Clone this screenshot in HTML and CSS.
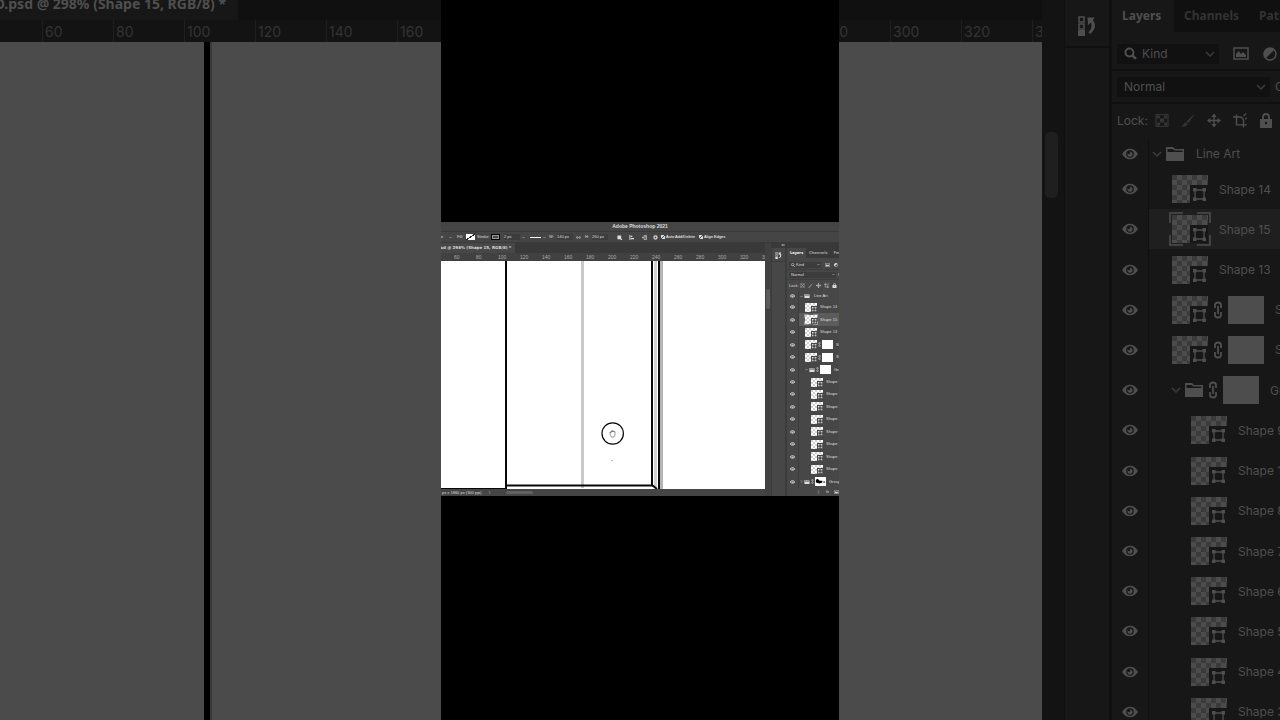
FILE: index.html
```html
<!DOCTYPE html>
<html lang="en">
<head>
    <meta charset="UTF-8">
    <meta name="viewport" content="width=device-width, initial-scale=1.0">
    <title>Adobe Photoshop 2021</title>
    <link rel="stylesheet" href="styles.css">
</head>
<body>
    <!-- shared icons -->
    <svg class="sprite" aria-hidden="true">
        <symbol id="eye" viewBox="0 0 16 12">
            <path d="M0 6C4-1 12-1 16 6C12 13 4 13 0 6Z" fill="currentColor"/>
            <circle cx="8" cy="6" r="3.800" class="hole"/>
            <circle cx="8" cy="6.300" r="2.500" fill="currentColor"/>
            <circle cx="7" cy="5" r="1.200" class="hole"/>
        </symbol>
        <symbol id="down" viewBox="0 0 10 10">
            <path d="M1 3L5 7L9 3" fill="none" stroke="currentColor" stroke-width="1.5"/>
        </symbol>
        <symbol id="right" viewBox="0 0 10 10">
            <path d="M3 1L7 5L3 9" fill="none" stroke="currentColor" stroke-width="1.5"/>
        </symbol>
        <symbol id="folder" viewBox="0 0 18 14">
            <path d="M0 0H7L9 2H18V14H0Z" fill="currentColor"/>
            <path d="M1.500 2H6.500L8.500 3.500H16.500V5H1.500Z" class="hole"/>
        </symbol>
        <symbol id="link" viewBox="0 0 10 18">
            <path d="M2 7V4Q2 1.500 5 1.500T8 4V7M2 11V14Q2 16.500 5 16.500T8 14V11M5 5V13" fill="none" stroke="currentColor" stroke-width="1.800"/>
        </symbol>
        <symbol id="shape" viewBox="0 0 18 18">
            <path d="M0 0H18V18H0Z" class="hole"/>
            <path d="M5 5H14V14H5Z" fill="none" stroke="currentColor" stroke-width="1.300"/>
            <path d="M3 3H6.500V6.500H3ZM12.500 3H16V6.500H12.500ZM3 12.500H6.500V16H3ZM12.500 12.500H16V16H12.500Z" fill="currentColor"/>
        </symbol>
        <symbol id="brackets" viewBox="0 0 42 34">
            <path d="M1 11V1H14M28 1H41V11M41 23V33H28M14 33H1V23" fill="none" stroke="currentColor" stroke-width="1.500"/>
        </symbol>
        <symbol id="history" viewBox="0 0 18 20">
            <path d="M1 1H6V6H1ZM1 8H6V13H1Z" fill="none" stroke="currentColor" stroke-width="1.500"/>
            <path d="M0 14H7V20H0ZM9.500 1.500H16.500L15 4Q20 12 12 18L10.500 16.500Q15 12 13 6.500L10 9Z" fill="currentColor"/>
        </symbol>
        <symbol id="search" viewBox="0 0 12 12">
            <path d="M7.500 7.500L11 11" stroke="currentColor" stroke-width="2.500"/>
            <circle cx="5" cy="5" r="3.700" fill="none" stroke="currentColor" stroke-width="1.800"/>
        </symbol>
        <symbol id="image" viewBox="0 0 16 13">
            <path d="M1 1H15V12H1Z" fill="none" stroke="currentColor" stroke-width="1.500"/>
            <path d="M3 10V7L6 4L8 7L10 5L13 8V10Z" fill="currentColor"/>
        </symbol>
        <symbol id="adjust" viewBox="0 0 14 14">
            <circle cx="7" cy="7" r="6" fill="none" stroke="currentColor" stroke-width="1.500"/>
            <path d="M11.500 2.500A6 6 0 0 0 2.500 11.500Z" fill="currentColor"/>
        </symbol>
        <symbol id="pixels" viewBox="0 0 14 14">
            <path d="M1 1H13V13H1Z" fill="none" stroke="currentColor" stroke-width="1.200"/>
            <path d="M2 2H5V5H2ZM9 2H12V5H9ZM5 5H9V9H5ZM2 9H5V12H2ZM9 9H12V12H9Z" fill="currentColor"/>
        </symbol>
        <symbol id="brush" viewBox="0 0 16 16">
            <path d="M16 0L8.500 11L6 9ZM5.500 10L8 12Q6 16 0 15Q3 14 3 12Q3.500 10 5.500 10Z" fill="currentColor"/>
        </symbol>
        <symbol id="move" viewBox="0 0 16 16">
            <path d="M8 2V14M2 8H14" stroke="currentColor" stroke-width="1.500"/>
            <path d="M8 0L11 4H5ZM8 16L5 12H11ZM0 8L4 5V11ZM16 8L12 11V5Z" fill="currentColor"/>
        </symbol>
        <symbol id="crop" viewBox="0 0 16 16">
            <path d="M4 1V13H16M0 4H9L12 7V16M12 3L15 0M14 6L16 5" fill="none" stroke="currentColor" stroke-width="1.600"/>
        </symbol>
        <symbol id="lock" viewBox="0 0 12 15">
            <path d="M3 7V4Q3 1 6 1T9 4V7" fill="none" stroke="currentColor" stroke-width="1.800"/>
            <path d="M0 6H12V15H0Z" fill="currentColor"/>
            <circle cx="6" cy="10" r="1.200" class="hole"/>
        </symbol>
        <symbol id="gear" viewBox="0 0 12 12">
            <circle cx="6" cy="6" r="3.700" fill="none" stroke="currentColor" stroke-width="3"/>
        </symbol>
        <symbol id="square" viewBox="0 0 12 12">
            <path d="M1 1H10V10H1ZM9 9H12V12H9Z" fill="currentColor"/>
        </symbol>
        <symbol id="align" viewBox="0 0 12 12">
            <path d="M1 0H3V12H1ZM4 2H8V5H4ZM4 7H12V10H4Z" fill="currentColor"/>
        </symbol>
        <symbol id="arrange" viewBox="0 0 12 12">
            <path d="M0 6H4M2 4V8M5 1H11V11H5ZM7 4H10M7 7H10" fill="none" stroke="currentColor" stroke-width="1.500"/>
        </symbol>
        <symbol id="collapse" viewBox="0 0 10 6">
            <path d="M0 3L4 0V6ZM5 3L9 0V6Z" fill="currentColor"/>
        </symbol>
    </svg>

    <main class="stage">
        <section class="side side-left">
            <div class="doc-tabs"><button class="doc-tab">D.psd @ 298% (Shape 15, RGB/8) *</button></div>
            <div class="ruler"><span>60</span><span>80</span><span>100</span><span>120</span><span>140</span><span>160</span></div>
            <div class="canvas">
                <svg class="side-line" viewBox="0 0 12 10" preserveAspectRatio="none">
                    <path d="M8 0H10V10H8Z" fill="#3a3a3a"/>
                    <path d="M2 0H8V10H2Z" fill="#000"/>
                </svg>
            </div>
        </section>

        <section class="video">
            <div class="app">
                <h1 class="title-bar">Adobe Photoshop 2021</h1>
                <form class="options">
                    <button type="button" class="tool-mode">e <svg class="chev"><use href="#down"/></svg></button>
                    <span>Fill:</span>
                    <button type="button" class="swatch fill" aria-label="Fill"></button>
                    <span>Stroke:</span>
                    <button type="button" class="swatch stroke" aria-label="Stroke"></button>
                    <label class="stroke-width"><input type="text" value="2 px" aria-label="Stroke width"><svg class="chev"><use href="#down"/></svg></label>
                    <button type="button" class="stroke-type" aria-label="Stroke type"><i></i><svg class="chev"><use href="#down"/></svg></button>
                    <label for="w">W:</label>
                    <input id="w" type="text" value="140 px">
                    <svg class="icon turned"><use href="#link"/></svg>
                    <label for="h">H:</label>
                    <input id="h" type="text" value="260 px">
                    <svg class="icon"><use href="#square"/></svg>
                    <svg class="icon"><use href="#align"/></svg>
                    <svg class="icon"><use href="#arrange"/></svg>
                    <svg class="icon"><use href="#gear"/></svg>
                    <label class="check"><input type="checkbox" checked>Auto Add/Delete</label>
                    <label class="check"><input type="checkbox" checked>Align Edges</label>
                </form>

                <div class="workspace">
                    <div class="document">
                        <div class="doc-tabs"><button class="doc-tab">D.psd @ 298% (Shape 15, RGB/8) *</button></div>
                        <div class="ruler"><span>60</span><span>80</span><span>100</span><span>120</span><span>140</span><span>160</span><span>180</span><span>200</span><span>220</span><span>240</span><span>260</span><span>280</span><span>300</span><span>320</span><span>340</span></div>
                        <div class="canvas">
                            <svg class="art" viewBox="0 0 324 228" preserveAspectRatio="none">
                                <path d="M140 0H143V227H140Z" fill="#c9c9c9"/>
                                <path d="M213 0H216V226H213Z" fill="#d0d0d0"/>
                                <path d="M219 0H222V228H219Z" fill="#b4b4b4"/>
                                <path d="M64 0H66V228H64ZM217 0H219V228H217Z" fill="#080808"/>
                                <path d="M65 224.500H211V0" fill="none" stroke="#080808" stroke-width="2"/>
                                <path d="M211 224L216 228M0 228H65" stroke="#080808" stroke-width="2"/>
                                <circle cx="171.700" cy="172.500" r="10.700" fill="#fff" stroke="#080808" stroke-width="1.200"/>
                                <path d="M169 173V171L170 172V170L171 171V169.500L172 171V169.500L173 171L174 170.500V174L173 176H170.500Z" fill="#fff" stroke="#555" stroke-width=".6"/>
                                <circle cx="171" cy="199.500" r=".8" fill="#aaa"/>
                            </svg>
                        </div>
                        <div class="status"><span>px x 1860 px (300 ppi)</span><svg class="chev"><use href="#right"/></svg><i class="thumb-h"></i></div>
                    </div>
                    <div class="scroll"><i></i></div>
                    <div class="side-panels">
                        <div class="collapse"><svg><use href="#collapse"/></svg></div>
                        <div class="dock"><button aria-label="History"><svg><use href="#history"/></svg></button></div>
                        <aside class="panel">
                            <nav class="panel-tabs"><button class="on">Layers</button><button>Channels</button><button>Paths</button></nav>
                            <div class="filter-row">
                                <div class="field kind"><svg class="find"><use href="#search"/></svg><select aria-label="Filter"><option>Kind</option></select><svg class="chev"><use href="#down"/></svg></div>
                                <svg class="image"><use href="#image"/></svg><svg class="adjust"><use href="#adjust"/></svg>
                            </div>
                            <div class="blend-row">
                                <div class="field"><select aria-label="Blend mode"><option>Normal</option></select><svg class="chev"><use href="#down"/></svg></div><span>Opacity</span>
                            </div>
                            <div class="lock-row"><span>Lock:</span><svg class="dim"><use href="#pixels"/></svg><svg class="dim"><use href="#brush"/></svg><svg><use href="#move"/></svg><svg><use href="#crop"/></svg><svg><use href="#lock"/></svg></div>
                            <div class="layer root"><svg class="eye"><use href="#eye"/></svg><div class="cell"><svg class="chev"><use href="#down"/></svg><svg class="folder"><use href="#folder"/></svg><span class="name">Line Art</span></div></div>
                            <div class="layers">
                                <div class="layer"><svg class="eye"><use href="#eye"/></svg><div class="cell in"><i class="thumb"><svg><use href="#shape"/></svg></i><span class="name">Shape 14</span></div></div>
                                <div class="layer selected"><svg class="eye"><use href="#eye"/></svg><div class="cell in"><i class="thumb"><svg><use href="#shape"/></svg><svg class="brackets"><use href="#brackets"/></svg></i><span class="name">Shape 15</span></div></div>
                                <div class="layer"><svg class="eye"><use href="#eye"/></svg><div class="cell in"><i class="thumb"><svg><use href="#shape"/></svg></i><span class="name">Shape 13</span></div></div>
                                <div class="layer"><svg class="eye"><use href="#eye"/></svg><div class="cell in"><i class="thumb"><svg><use href="#shape"/></svg></i><svg class="link"><use href="#link"/></svg><i class="mask"></i><span class="name">Shape 12</span></div></div>
                                <div class="layer"><svg class="eye"><use href="#eye"/></svg><div class="cell in"><i class="thumb"><svg><use href="#shape"/></svg></i><svg class="link"><use href="#link"/></svg><i class="mask"></i><span class="name">Shape 11</span></div></div>
                                <div class="layer"><svg class="eye"><use href="#eye"/></svg><div class="cell group"><svg class="chev"><use href="#down"/></svg><svg class="folder"><use href="#folder"/></svg><svg class="link"><use href="#link"/></svg><i class="mask"></i><span class="name">Group 1</span></div></div>
                                <div class="layer"><svg class="eye"><use href="#eye"/></svg><div class="cell deep"><i class="thumb"><svg><use href="#shape"/></svg></i><span class="name">Shape 9</span></div></div>
                                <div class="layer"><svg class="eye"><use href="#eye"/></svg><div class="cell deep"><i class="thumb"><svg><use href="#shape"/></svg></i><span class="name">Shape 10</span></div></div>
                                <div class="layer"><svg class="eye"><use href="#eye"/></svg><div class="cell deep"><i class="thumb"><svg><use href="#shape"/></svg></i><span class="name">Shape 8</span></div></div>
                                <div class="layer"><svg class="eye"><use href="#eye"/></svg><div class="cell deep"><i class="thumb"><svg><use href="#shape"/></svg></i><span class="name">Shape 7</span></div></div>
                                <div class="layer"><svg class="eye"><use href="#eye"/></svg><div class="cell deep"><i class="thumb"><svg><use href="#shape"/></svg></i><span class="name">Shape 6</span></div></div>
                                <div class="layer"><svg class="eye"><use href="#eye"/></svg><div class="cell deep"><i class="thumb"><svg><use href="#shape"/></svg></i><span class="name">Shape 5</span></div></div>
                                <div class="layer"><svg class="eye"><use href="#eye"/></svg><div class="cell deep"><i class="thumb"><svg><use href="#shape"/></svg></i><span class="name">Shape 4</span></div></div>
                                <div class="layer"><svg class="eye"><use href="#eye"/></svg><div class="cell deep"><i class="thumb"><svg><use href="#shape"/></svg></i><span class="name">Shape 3</span></div></div>
                                <div class="layer"><svg class="eye"><use href="#eye"/></svg><div class="cell"><svg class="chev"><use href="#right"/></svg><svg class="folder"><use href="#folder"/></svg><svg class="link"><use href="#link"/></svg><i class="mask"><svg viewBox="0 0 12 9"><path d="M1 3L3 2L5 4L8 4V6L5 7L1 6ZM9 5H11V6H9Z" fill="#000"/></svg></i><span class="name">Group 2</span></div></div>
                            </div>
                            <footer class="panel-foot"><svg class="dim"><use href="#link"/></svg><em>fx</em><svg><use href="#image"/></svg></footer>
                        </aside>
                    </div>
                </div>
            </div>
        </section>

        <section class="side side-right">
            <div class="document">
                <div class="doc-tabs"></div>
                <div class="ruler"><span>280</span><span>300</span><span>320</span><span>340</span></div>
                <div class="canvas"></div>
            </div>
            <div class="scroll"><i></i></div>
            <div class="dock"><button aria-label="History"><svg><use href="#history"/></svg></button></div>
            <aside class="panel">
                <nav class="panel-tabs"><button class="on">Layers</button><button>Channels</button><button>Paths</button></nav>
                <div class="filter-row">
                    <div class="field kind"><svg class="find"><use href="#search"/></svg><select aria-label="Filter"><option>Kind</option></select><svg class="chev"><use href="#down"/></svg></div>
                    <svg class="image"><use href="#image"/></svg><svg class="adjust"><use href="#adjust"/></svg>
                </div>
                <div class="blend-row">
                    <div class="field"><select aria-label="Blend mode"><option>Normal</option></select><svg class="chev"><use href="#down"/></svg></div><span>Opacity</span>
                </div>
                <div class="lock-row"><span>Lock:</span><svg class="dim"><use href="#pixels"/></svg><svg class="dim"><use href="#brush"/></svg><svg><use href="#move"/></svg><svg><use href="#crop"/></svg><svg><use href="#lock"/></svg></div>
                <div class="layer root"><svg class="eye"><use href="#eye"/></svg><div class="cell"><svg class="chev"><use href="#down"/></svg><svg class="folder"><use href="#folder"/></svg><span class="name">Line Art</span></div></div>
                <div class="layers">
                    <div class="layer"><svg class="eye"><use href="#eye"/></svg><div class="cell in"><i class="thumb"><svg><use href="#shape"/></svg></i><span class="name">Shape 14</span></div></div>
                    <div class="layer selected"><svg class="eye"><use href="#eye"/></svg><div class="cell in"><i class="thumb"><svg><use href="#shape"/></svg><svg class="brackets"><use href="#brackets"/></svg></i><span class="name">Shape 15</span></div></div>
                    <div class="layer"><svg class="eye"><use href="#eye"/></svg><div class="cell in"><i class="thumb"><svg><use href="#shape"/></svg></i><span class="name">Shape 13</span></div></div>
                    <div class="layer"><svg class="eye"><use href="#eye"/></svg><div class="cell in"><i class="thumb"><svg><use href="#shape"/></svg></i><svg class="link"><use href="#link"/></svg><i class="mask"></i><span class="name">Shape 12</span></div></div>
                    <div class="layer"><svg class="eye"><use href="#eye"/></svg><div class="cell in"><i class="thumb"><svg><use href="#shape"/></svg></i><svg class="link"><use href="#link"/></svg><i class="mask"></i><span class="name">Shape 11</span></div></div>
                    <div class="layer"><svg class="eye"><use href="#eye"/></svg><div class="cell group"><svg class="chev"><use href="#down"/></svg><svg class="folder"><use href="#folder"/></svg><svg class="link"><use href="#link"/></svg><i class="mask"></i><span class="name">Group 1</span></div></div>
                    <div class="layer"><svg class="eye"><use href="#eye"/></svg><div class="cell deep"><i class="thumb"><svg><use href="#shape"/></svg></i><span class="name">Shape 9</span></div></div>
                    <div class="layer"><svg class="eye"><use href="#eye"/></svg><div class="cell deep"><i class="thumb"><svg><use href="#shape"/></svg></i><span class="name">Shape 10</span></div></div>
                    <div class="layer"><svg class="eye"><use href="#eye"/></svg><div class="cell deep"><i class="thumb"><svg><use href="#shape"/></svg></i><span class="name">Shape 8</span></div></div>
                    <div class="layer"><svg class="eye"><use href="#eye"/></svg><div class="cell deep"><i class="thumb"><svg><use href="#shape"/></svg></i><span class="name">Shape 7</span></div></div>
                    <div class="layer"><svg class="eye"><use href="#eye"/></svg><div class="cell deep"><i class="thumb"><svg><use href="#shape"/></svg></i><span class="name">Shape 6</span></div></div>
                    <div class="layer"><svg class="eye"><use href="#eye"/></svg><div class="cell deep"><i class="thumb"><svg><use href="#shape"/></svg></i><span class="name">Shape 5</span></div></div>
                    <div class="layer"><svg class="eye"><use href="#eye"/></svg><div class="cell deep"><i class="thumb"><svg><use href="#shape"/></svg></i><span class="name">Shape 4</span></div></div>
                    <div class="layer"><svg class="eye"><use href="#eye"/></svg><div class="cell deep"><i class="thumb"><svg><use href="#shape"/></svg></i><span class="name">Shape 3</span></div></div>
                </div>
            </aside>
        </section>
    </main>
</body>
</html>
```
FILE: styles.css
```css
* {
    box-sizing: border-box;
}
body {
    margin: 0;
    background: #000;
    font-family: Inter, "Liberation Sans", sans-serif;
    overflow: hidden;
}
button, input, select {
    appearance: none;
    border: 0;
    margin: 0;
    padding: 0;
    background: none;
    color: inherit;
    font: inherit;
    text-align: left;
    white-space: nowrap;
}
svg {
    display: block;
    flex: none;
}
.sprite {
    position: absolute;
    width: 0;
    height: 0;
}
.hole {
    fill: var(--panel);
}
.stage {
    display: flex;
    height: 100vh;
}

/* dimmed sides */
.side {
    flex: 1 1 0;
    min-width: 0;
    display: flex;
    overflow: hidden;
    background: #161616;
    color: #4f4f4f;
    font-size: 12px;
    --panel: #171717;
    --field: #111;
    --dark: #101010;
    --ruler: #131313;
    --line: #101010;
    --canvas: #4b4b4b;
    --mask: #4d4d4d;
    --check-a: #4c4c4c;
    --check-b: #3b3b3b;
    --selected: #1f1f1f;
    --dim: #343434;
    --tick: #333;
}
.side-left {
    flex-direction: column;
}
.document {
    flex: 1;
    min-width: 0;
    display: flex;
    flex-direction: column;
    overflow: hidden;
}
.doc-tabs {
    display: flex;
    align-items: flex-end;
    flex: none;
    background: var(--dark);
    font-family: "Noto Sans", sans-serif;
    font-weight: bold;
}
.doc-tab {
    display: flex;
    align-items: center;
    justify-content: flex-end;
    background: var(--panel);
}
.ruler {
    display: grid;
    grid-auto-flow: column;
    justify-content: start;
    flex: none;
    overflow: hidden;
    background: var(--ruler);
    color: var(--tick);
}
.canvas {
    flex: 1;
    min-height: 0;
    background: var(--canvas);
}
.side .doc-tabs {
    height: 20px;
}
.side .doc-tab {
    width: 238px;
    height: 34px;
    padding-right: 12px;
    font-size: 14px;
}
.side .ruler {
    grid-auto-columns: 71px;
    height: 22px;
    padding-left: 42px;
    font-size: 14px;
    line-height: 24px;
}
.side .ruler span {
    border-left: 1px solid #1f1f1f;
    padding-left: 2px;
}
.side-right .ruler {
    grid-template-columns: 51px;
    padding-left: 0;
}
.side-right .ruler span:first-child {
    margin-left: -20px;
}
.side-line {
    width: 12px;
    height: 100%;
    margin-left: 202px;
}

/* scroll bar and collapsed dock */
.scroll {
    flex: none;
    background: var(--ruler);
}
.scroll i {
    display: block;
    background: var(--selected);
}
.dock {
    flex: none;
    background: var(--panel);
    border-style: solid;
    border-color: var(--line);
}
.dock button {
    display: block;
}
.dock svg {
    width: 100%;
    height: 100%;
}
.side .scroll {
    width: 22px;
    padding: 132px 6px 0 3px;
}
.side .scroll i {
    height: 66px;
    border-radius: 5px;
}
.side .dock {
    width: 48px;
    border-width: 0 3px 0 1px;
}
.side .dock button {
    width: 44px;
    height: 48px;
    padding: 16px 13px 10px;
    border-bottom: 2px solid var(--line);
}

/* layers panel */
.panel {
    flex: none;
    display: flex;
    flex-direction: column;
    overflow: hidden;
    background: var(--panel);
}
.panel-tabs {
    display: flex;
    flex: none;
    background: var(--dark);
    font-family: "Noto Sans", sans-serif;
    font-weight: bold;
}
.panel-tabs button {
    flex: none;
    color: var(--tab, #333);
}
.panel-tabs .on {
    background: var(--panel);
    color: inherit;
}
.filter-row, .blend-row, .lock-row, .field, .cell, .layer {
    display: flex;
    align-items: center;
    flex: none;
}
.field {
    background: var(--field);
}
.field select {
    flex: 1;
    min-width: 0;
}
.dim {
    color: var(--dim);
}
.layers {
    display: grid;
    grid-auto-rows: 1fr;
    flex: none;
}
.cell {
    flex: 1;
    min-width: 0;
    height: 100%;
    white-space: nowrap;
    overflow: hidden;
    border-left: 1px solid var(--line);
}
.name, .thumb, .mask {
    flex: none;
}
.selected .cell {
    background: var(--selected);
}
.thumb {
    position: relative;
    display: flex;
    align-items: flex-end;
    justify-content: flex-end;
    background: repeating-conic-gradient(var(--check-a) 0 25%, var(--check-b) 0 50%);
}
.thumb .brackets {
    position: absolute;
}
.mask {
    background: var(--mask);
}

.side .panel {
    width: 168px;
}
.side .panel-tabs {
    height: 32px;
}
.side .panel-tabs button {
    padding: 0 10px 2px;
}
.side .panel-tabs .on {
    width: 62px;
}
.side .filter-row {
    height: 39px;
    padding: 6px 0 0 5px;
    border-bottom: 2px solid var(--line);
}
.side .blend-row {
    height: 33px;
    padding-left: 5px;
    border-bottom: 2px solid var(--line);
}
.side .field {
    width: 153px;
    height: 20px;
    padding: 0 4px 0 7px;
}
.side .kind {
    width: 102px;
}
.side .chev {
    width: 10px;
    height: 10px;
    color: #3c3c3c;
}
.side .find {
    width: 13px;
    height: 13px;
    margin-right: 5px;
}
.side .image {
    width: 16px;
    height: 13px;
    margin: 0 14px;
}
.side .adjust {
    width: 14px;
    height: 14px;
}
.side .blend-row span {
    padding-left: 5px;
}
.side .lock-row {
    height: 32px;
    padding-left: 5px;
    gap: 12px;
}
.side .lock-row span {
    width: 26px;
}
.side .lock-row svg {
    width: 14px;
    height: 15px;
}
.side .root {
    height: 33px;
    padding-top: 2px;
}
.side .layers {
    height: 563px;
}
.side .eye {
    width: 16px;
    height: 12px;
    margin: 0 10px;
}
.side .cell {
    padding-left: 3px;
}
.side .folder {
    width: 18px;
    height: 14px;
    margin-left: 4px;
}
.side .root .name {
    padding-left: 12px;
}
.side .cell.in {
    padding-left: 23px;
}
.side .cell.group {
    padding-left: 22px;
}
.side .cell.deep {
    padding-left: 42px;
}
.side .name {
    padding-left: 11px;
}
.side .thumb {
    width: 36px;
    height: 28px;
    background-size: 10px 10px;
}
.side .thumb svg {
    width: 18px;
    height: 18px;
}
.side .thumb .brackets {
    right: -3px;
    bottom: -3px;
    width: 42px;
    height: 34px;
}
.side .link {
    width: 10px;
    height: 18px;
    margin: 0 5px;
}
.side .mask {
    width: 36px;
    height: 28px;
}

/* recording in the middle */
.video {
    flex: 0 0 398px;
    min-width: 0;
    display: flex;
    align-items: center;
    background: #000;
}
.app {
    flex: 1;
    min-width: 0;
    display: flex;
    flex-direction: column;
    overflow: hidden;
    margin-bottom: 2px;
    background: #454545;
    color: #ddd;
    font-family: "Liberation Sans", sans-serif;
    font-size: 4px;
    line-height: 6px;
    --panel: #474747;
    --field: #3c3c3c;
    --dark: #393939;
    --ruler: #414141;
    --line: #3c3c3c;
    --canvas: #fff;
    --mask: #fff;
    --check-a: #fff;
    --check-b: #d0d0d0;
    --selected: #5c5c5c;
    --dim: #999;
    --tick: #aaa;
    --tab: #aaa;
}
.title-bar {
    margin: 0;
    height: 10px;
    border-bottom: 1px solid #3a3a3a;
    font-size: 5px;
    font-weight: bold;
    line-height: 9px;
    text-align: center;
}
.options {
    display: grid;
    grid-template-columns: 16px 9px 11px 14px 13px 26px 19px 8px 19px 9px 7px 25px 12px 13px 11px 8px 38px 1fr;
    align-items: center;
    height: 11px;
    border-bottom: 1px solid #3a3a3a;
    white-space: nowrap;
}
.options input {
    width: 16px;
    height: 6px;
    background: #3c3c3c;
}
.options .icon {
    width: 5px;
    height: 5px;
}
.options .turned {
    rotate: 90deg;
}
.app .chev {
    width: 3px;
    height: 3px;
}
.tool-mode {
    display: flex;
    align-items: center;
    gap: 6px;
}
.swatch {
    width: 9px;
    height: 6px;
}
.fill {
    background: linear-gradient(145deg, #fff 45%, #222 45% 55%, #fff 55%);
}
.stroke {
    border: 1px solid #000;
    outline: 1px solid #999;
    outline-offset: -2px;
}
.stroke-width, .stroke-type, .check {
    display: flex;
    align-items: center;
    gap: 2px;
}
.stroke-type i {
    width: 11px;
    height: 1px;
    background: #fff;
}
.options .check {
    gap: 1px;
    color: #fff;
}
.options .check input {
    flex: none;
    width: 4px;
    height: 4px;
    background: linear-gradient(135deg, #ddd 40%, #444 40% 60%, #ddd 60%);
}
.workspace {
    display: flex;
    height: 253px;
}
.app .doc-tabs {
    height: 10px;
    overflow: hidden;
}
.app .doc-tab {
    width: 74px;
    height: 10px;
    padding-right: 4px;
    font-family: "DejaVu Sans", sans-serif;
}
.app .ruler {
    grid-auto-columns: 22px;
    height: 8px;
    padding-left: 13px;
    font-size: 5px;
    line-height: 9px;
}
.art {
    width: 100%;
    height: 100%;
}
.status {
    display: flex;
    align-items: center;
    height: 7px;
    padding-left: 1px;
    white-space: nowrap;
}
.status span {
    width: 46px;
}
.thumb-h {
    width: 27px;
    height: 3px;
    margin-left: 15px;
    border-radius: 2px;
    background: #626262;
}
.app .scroll {
    width: 6px;
    padding: 46px 1px 0;
}
.app .scroll i {
    height: 20px;
    border-radius: 2px;
}
.side-panels {
    display: grid;
    grid-template: 5px 1fr / 16px 52px;
    flex: none;
    min-height: 0;
}
.collapse {
    grid-column: 1 / -1;
    padding: 1px 0 0 10px;
    background: var(--dark);
}
.collapse svg {
    width: 4px;
    height: 2px;
}
.app .dock {
    border-width: 0 2px 0 1px;
}
.app .dock button {
    width: 13px;
    height: 14px;
    padding: 4px 3px 2px;
    border-bottom: 1px solid var(--line);
}
.app .panel {
    min-width: 0;
    min-height: 0;
}
.app .panel-tabs {
    height: 10px;
    font-family: "Open Sans", sans-serif;
}
.app .panel-tabs button {
    padding: 0 3px;
}
.app .panel-tabs .on {
    width: 19px;
    color: #fff;
}
.app .filter-row {
    height: 12px;
    padding: 2px 0 0 2px;
    border-bottom: 1px solid var(--line);
}
.app .blend-row {
    height: 10px;
    padding-left: 2px;
    border-bottom: 1px solid var(--line);
}
.app .field {
    width: 47px;
    height: 6px;
    padding: 0 1px 0 2px;
}
.app .kind {
    width: 32px;
}
.app .find {
    width: 4px;
    height: 4px;
    margin-right: 1px;
}
.app .image {
    width: 5px;
    height: 4px;
    margin: 0 4px;
}
.app .adjust {
    width: 4px;
    height: 4px;
}
.app .blend-row span {
    padding-left: 2px;
}
.app .lock-row {
    height: 11px;
    padding-left: 2px;
    gap: 3px;
}
.app .lock-row span {
    width: 8px;
}
.app .lock-row svg {
    width: 5px;
    height: 5px;
}
.app .root {
    height: 10px;
}
.app .layers {
    height: 187px;
}
.app .eye {
    width: 5px;
    height: 4px;
    margin: 0 3px;
}
.app .cell {
    padding-left: 1px;
}
.app .folder {
    width: 6px;
    height: 4px;
    margin-left: 1px;
}
.app .root .name {
    padding-left: 4px;
}
.app .cell.in {
    padding-left: 6px;
}
.app .cell.group {
    padding-left: 6px;
}
.app .cell.deep {
    padding-left: 12px;
}
.app .name {
    padding-left: 3px;
}
.app .thumb {
    width: 12px;
    height: 9px;
    background-size: 4px 4px;
}
.app .thumb svg {
    width: 6px;
    height: 6px;
}
.app .thumb .brackets {
    right: -1px;
    bottom: -1px;
    width: 14px;
    height: 11px;
}
.app .link {
    width: 3px;
    height: 5px;
    margin: 0 1px;
}
.app .mask {
    width: 11px;
    height: 9px;
}
.panel-foot {
    display: flex;
    align-items: center;
    justify-content: flex-end;
    gap: 5px;
    flex: 1;
}
.panel-foot svg {
    width: 5px;
    height: 4px;
}
```
